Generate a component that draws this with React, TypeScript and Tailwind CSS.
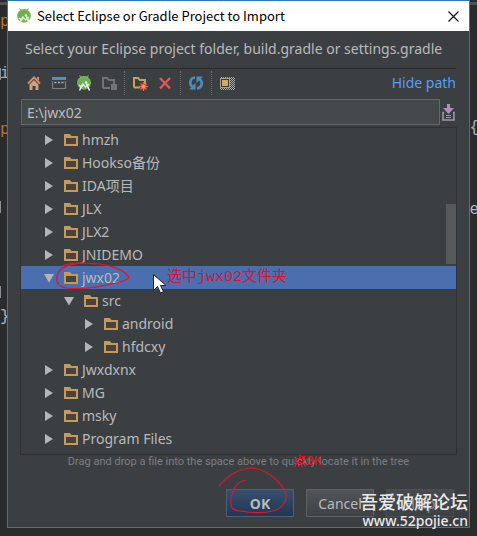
import React from "react";

type Node = { name: string; level: number; open?: boolean; selected?: boolean };

const nodes: Node[] = [
  { name: "hmzh", level: 0 },
  { name: "Hookso备份", level: 0 },
  { name: "IDA项目", level: 0 },
  { name: "JLX", level: 0 },
  { name: "JLX2", level: 0 },
  { name: "JNIDEMO", level: 0 },
  { name: "jwx02", level: 0, open: true, selected: true },
  { name: "src", level: 1, open: true },
  { name: "android", level: 2 },
  { name: "hfdcxy", level: 2 },
  { name: "Jwxdxnx", level: 0 },
  { name: "MG", level: 0 },
  { name: "msky", level: 0 },
  { name: "Program Files", level: 0 },
];

const indents = ["pl-[23px]", "pl-[43px]", "pl-[63px]"];

function StudioLogo() {
  return (
    <svg width="16" height="16" viewBox="0 0 16 16" aria-hidden="true">
      <path d="M3.500.5l2 2.500M12.500.5l-2 2.500" stroke="#78b25a" strokeWidth="1.200" />
      <circle cx="8" cy="7.800" r="6.800" fill="#6fae4e" />
      <circle cx="8" cy="7.800" r="6.300" fill="none" stroke="#8cc46c" strokeWidth="1" strokeDasharray="1.500 1" />
      <path d="M3.500 15.500L7 8.500M10.500 8.500l3 7" stroke="#f1f4ee" strokeWidth="1.600" />
      <path d="M3 10l2.500 2 2-2.500 2 2.500 3.500-3" fill="none" stroke="#dfead8" strokeWidth="1.300" />
      <circle cx="10" cy="7.500" r="1.300" fill="#f1f4ee" />
    </svg>
  );
}

function HomeIcon() {
  return (
    <svg width="16" height="16" viewBox="0 0 16 16" aria-hidden="true">
      <path d="M2 8.600L8 2.400l6 6.200" fill="none" stroke="#d3906b" strokeWidth="2" />
      <path d="M3.500 9.500L8 5l4.500 4.500V15H9.500v-4h-3v4h-3z" fill="#cf9e7a" />
      <path d="M11 2h2v4l-2-2z" fill="#d3906b" />
    </svg>
  );
}

function ProjectIcon() {
  return (
    <svg width="16" height="16" viewBox="0 0 16 16" aria-hidden="true">
      <path d="M1 2h14v3H1z" fill="#4b93c4" />
      <path d="M1.500 6v7.500h13V6" fill="none" stroke="#7b7e80" strokeWidth="1.200" />
      <path d="M3.500 7.500h2M7 7.500h2M10.500 7.500h2" stroke="#a9b7c0" strokeWidth="1.500" />
    </svg>
  );
}

function ModuleIcon() {
  return (
    <svg width="16" height="16" viewBox="0 0 16 16" aria-hidden="true">
      <path d="M2 13V3h4l2 2h5v4M2 13h7" fill="none" stroke="#717375" strokeWidth="2" />
      <path d="M10 9h6v6h-6z" fill="#717375" />
    </svg>
  );
}

function NewFolderIcon() {
  return (
    <svg width="16" height="16" viewBox="0 0 16 16" aria-hidden="true">
      <path d="M2 12.500V3h4l2 2h5v4M2 12.500h6" fill="none" stroke="#c9a15c" strokeWidth="2" />
      <path d="M11.500 7v9M7 11.500h9M8.500 8.500l6 6M14.500 8.500l-6 6" stroke="#f0604c" strokeWidth="1.400" />
      <circle cx="11.500" cy="11.500" r="1.800" fill="#ff9078" />
    </svg>
  );
}

function DeleteIcon() {
  return (
    <svg width="16" height="16" viewBox="0 0 16 16" aria-hidden="true">
      <path d="M3 3l10 10.500M13 3L3 13.500" stroke="#e0575a" strokeWidth="2.400" />
    </svg>
  );
}

function RefreshIcon() {
  return (
    <svg width="16" height="16" viewBox="0 0 16 16" aria-hidden="true">
      <path d="M7 2.500C1.500 3 1 9.500 4.500 12M9 13.500c5.500-.5 6-7 2.500-9.500" fill="none" stroke="#4c8db8" strokeWidth="2.600" />
      <path d="M7.500 8v6.500H1z" fill="#4c8db8" />
      <path d="M8.500 8V1.500H15z" fill="#4c8db8" />
    </svg>
  );
}

function HiddenFilesIcon() {
  return (
    <svg width="16" height="16" viewBox="0 0 16 16" aria-hidden="true">
      <defs>
        <pattern id="dots" width="2" height="2" patternUnits="userSpaceOnUse">
          <path d="M0 0h1v1H0zM1 1h1v1H1z" fill="#a4a6a8" />
        </pattern>
      </defs>
      <path d="M1 2h15v13H1z" fill="url(#dots)" />
      <path d="M1.500 3.500h9v9h-9z" fill="#3c3a36" stroke="#a8a39a" />
      <path d="M3 5h6v6H3z" fill="#d6a860" />
    </svg>
  );
}

function PathHistoryIcon() {
  return (
    <svg width="13" height="18" viewBox="0 0 13 18" aria-hidden="true">
      <path d="M2 9.500H1V17h11V9.500h-1" fill="none" stroke="#9a9c9e" strokeWidth="1.600" />
      <path d="M4 12.500h5M4 14.500h5" stroke="#9a9c9e" />
      <path d="M5 1h3v4h4l-5.500 6L1 5h4z" fill="#b58bc4" />
    </svg>
  );
}

function FolderIcon() {
  return (
    <svg width="14" height="13" viewBox="0 0 14 13" aria-hidden="true">
      <path d="M0 1h6l1.500 2H14v10H0z" fill="#c39b5f" />
      <path d="M2 5h10v6H2z" fill="#4c423a" />
    </svg>
  );
}

function Arrow({ open }: { open?: boolean }) {
  return (
    <svg width="10" height="10" viewBox="0 0 10 10" aria-hidden="true">
      <path d={open ? "M0 1h10L5 9.500z" : "M1 0v10l8-5z"} fill="#b3b6b8" />
    </svg>
  );
}

function ToolButton({ label, children }: { label: string; children: React.ReactNode }) {
  return (
    <button type="button" aria-label={label} className="flex size-[25px] items-center justify-center">
      {children}
    </button>
  );
}

function Divider() {
  return <span className="mr-[2px] ml-[3px] h-6 border-l border-dotted border-[#6a6d6f]" />;
}

export default function App() {
  return (
    <div className="relative flex min-h-screen overflow-hidden bg-[#2a2b2c] px-[7px] pb-2 font-['Noto_Sans','Noto_Sans_CJK_SC',sans-serif] text-[#b8babc]">
      <div aria-hidden="true" className="font-['Liberation_Mono',monospace] text-base leading-5">
        <span className="absolute top-[2px] left-0 h-[3px] w-full bg-[#4d5254]" />
        <span className="absolute top-3 left-0 text-[#b87333]">p</span>
        <span className="absolute top-16 left-0 text-[#a9b0b6]">i</span>
        <span className="absolute top-[68px] left-0 h-3 w-px bg-[#8a8f92]" />
        <span className="absolute top-[120px] left-0 text-[#b87333]">p</span>
        <span className="absolute top-[201px] left-0 h-3 w-px bg-[#8a8f92]" />
        <span className="absolute top-[286px] left-0 h-3 w-px bg-[#8a8f92]" />
        <span className="absolute top-[307px] left-0 text-[#a9b7c6]">{"}"}</span>
        <span className="absolute top-[118px] right-[-2px] text-[#a9b7c6]">{"{"}</span>
        <span className="absolute top-[200px] right-[-2px] text-[#a9b7c6]">e</span>
      </div>

      <main className="relative flex min-w-0 flex-1 flex-col border border-[#2b7ab8] bg-[#3c3f41]">
        <header className="flex h-[30px] items-center bg-white px-2 text-black">
          <StudioLogo />
          <h1 className="ml-[5px] flex-1 font-['Noto_Sans_CJK_SC',sans-serif] text-[13px] leading-[28px] whitespace-nowrap">Select Eclipse or Gradle Project to Import</h1>
          <button type="button" aria-label="Close" className="flex size-4 items-center justify-center">
            <svg width="11" height="11" viewBox="0 0 11 11" aria-hidden="true">
              <path d="M.5.5l10 10M10.500.5l-10 10" stroke="#111" strokeWidth="1.200" />
            </svg>
          </button>
        </header>

        <div className="flex flex-1 flex-col px-[13px]">
          <p className="h-[38px] border-b border-[#2b2c2d] pl-1 text-[14px] leading-[36px] whitespace-nowrap">
            Select your Eclipse project folder, build.gradle or settings.gradle
          </p>

          <div className="flex h-7 items-center">
            <ToolButton label="Home"><HomeIcon /></ToolButton>
            <ToolButton label="Project directory"><ProjectIcon /></ToolButton>
            <ToolButton label="Android Studio"><StudioLogo /></ToolButton>
            <ToolButton label="Module directory"><ModuleIcon /></ToolButton>
            <Divider />
            <ToolButton label="New folder"><NewFolderIcon /></ToolButton>
            <ToolButton label="Delete"><DeleteIcon /></ToolButton>
            <Divider />
            <ToolButton label="Refresh"><RefreshIcon /></ToolButton>
            <Divider />
            <ToolButton label="Show hidden files"><HiddenFilesIcon /></ToolButton>
            <a href="#path" className="ml-auto text-[14px] leading-5 text-[#589df6]">Hide path</a>
          </div>

          <div className="mt-[2px] flex items-center">
            <input
              id="path"
              aria-label="Path"
              defaultValue={"E:\\jwx02"}
              className="h-[26px] min-w-0 flex-1 border border-[#646668] bg-[#45494a] px-[5px] text-[14px] text-[#bbbdbf] outline-none"
            />
            <button type="button" aria-label="Path history" className="flex w-4 justify-center">
              <PathHistoryIcon />
            </button>
          </div>

          <div className="relative mt-[3px] pb-1 ring-1 ring-[#2f3133]">
            <ul role="tree" aria-label="Folders" className="text-[14px]">
              {nodes.map((n) => (
                <li
                  key={n.name}
                  role="treeitem"
                  aria-level={n.level + 1}
                  aria-expanded={!!n.open}
                  aria-selected={!!n.selected}
                  className={`flex h-[23px] items-center ${indents[n.level]} ${n.selected ? "bg-[#4b6eaf]" : ""}`}
                >
                  <Arrow open={n.open} />
                  <span className="mr-1 ml-[10px]"><FolderIcon /></span>
                  <span className="leading-[23px]">{n.name}</span>
                </li>
              ))}
            </ul>
            <span className="absolute top-[76px] right-0 h-[60px] w-[10px] bg-[#58595b]" />
          </div>

          <p className="text-center font-['Roboto',sans-serif] text-[11px] leading-4 whitespace-nowrap text-[#7c7e80]">
            Drag and drop a file into the space above to quickly locate it in the tree
          </p>

          <div className="mt-[19px] flex justify-end gap-3 pr-[2px] text-[14px]">
            <button type="button" className="h-7 w-[68px] border border-[#4c5f78] bg-linear-to-b from-[#37506f] to-[#233650] font-bold">OK</button>
            <button type="button" className="h-7 w-[68px] border border-[#5e6163] bg-linear-to-b from-[#515557] to-[#3f4244]">Cancel</button>
            <button type="button" className="h-7 w-[68px] border border-[#4c4f51] bg-linear-to-b from-[#484b4d] to-[#3e4143] text-[#8c8e90]">Help</button>
          </div>
        </div>
      </main>

      <svg className="pointer-events-none absolute top-0 left-0" width="477" height="536" viewBox="0 0 477 536" aria-hidden="true">
        <g fill="none" stroke="#e0142c" strokeWidth="1.200">
          <path d="M96 264C80 262 62 264 58 273c-3 8-1 13 8 15 20 2 38-2 50-5 8-2 13-4 13-6-6-9-26-14-42-14-12-1-20 1-25 3" />
          <path d="M246 480c-8 1-14 8-15 20-1 9 2 10 9 11 12 2 25 2 33 0 9-2 14-10 13-16-2-10-16-24-32-27-14 0-26 7-35 18" />
        </g>
        <path d="M153.500 274.500v16l4-4 3 6.500 3-1.500-3-6h5.500z" fill="#fff" stroke="#1c2438" />
      </svg>
      <span className="absolute top-[268px] left-[167px] font-['Liberation_Mono','Noto_Sans_CJK_SC',monospace] text-[15px] leading-5 whitespace-nowrap text-[#d31638]">
        选中jwx02文件夹
      </span>
      <span className="absolute top-[452px] left-[293px] font-['Liberation_Mono','Noto_Sans_CJK_SC',monospace] text-[13px] leading-5 whitespace-nowrap text-[#e01020]">
        点OK
      </span>
      <div className="absolute right-[9px] bottom-[6px] text-right whitespace-nowrap text-[#e8e9ea]">
        <p className="font-['Noto_Sans_CJK_SC',sans-serif] text-[18px] leading-[22px] font-medium">吾爱破解论坛</p>
        <p className="text-[14px] leading-[18px] font-medium">www.52pojie.cn</p>
      </div>
    </div>
  );
}
